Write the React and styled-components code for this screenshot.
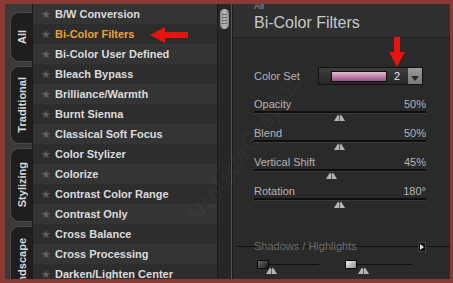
import React from "react";
import styled, { createGlobalStyle } from "styled-components";

const GlobalStyle = createGlobalStyle`
  html, body {
    margin: 0;
    padding: 0;
    background: #8a3a34;
  }
  body {
    font-family: "Liberation Sans", Arial, sans-serif;
  }
`;

const Frame = styled.div`
  position: relative;
  width: 453px;
  height: 283px;
  box-sizing: border-box;
  padding: 4px 3px 4px 5px;
  background: #8a3a34;
  overflow: hidden;
`;

const Inner = styled.div`
  display: flex;
  height: 100%;
  background: #2a2a2a;
  overflow: hidden;
`;

const TabStrip = styled.div`
  width: 28px;
  flex: none;
  display: flex;
  flex-direction: column;
  gap: 4px;
  padding-top: 8px;
  box-sizing: border-box;
  background: #3a3a3a;
  border-right: 1px solid #1a1a1a;
`;

const Tab = styled.div`
  flex: none;
  height: ${(p) => p.h}px;
  margin-left: 5px;
  background: #1e1e1e;
  border: 1px solid #4a4a4a;
  border-right: none;
  border-radius: 9px 0 0 9px;
  display: flex;
  align-items: center;
  justify-content: center;
  overflow: hidden;
`;

const TabLabel = styled.span`
  writing-mode: vertical-rl;
  transform: rotate(180deg);
  color: #d8d8d8;
  font-size: 11px;
  font-weight: bold;
  white-space: nowrap;
`;

const List = styled.div`
  width: 184px;
  flex: none;
  display: flex;
  flex-direction: column;
  background: #2e2e2e;
`;

const Row = styled.div`
  flex: none;
  height: 20px;
  display: flex;
  align-items: center;
  gap: 4px;
  padding-left: 8px;
  background: ${(p) => (p.odd ? "#2d2d2d" : "#343434")};
  font-size: 11px;
  font-weight: bold;
  color: ${(p) => (p.active ? "#f0a030" : "#dcdcdc")};
  white-space: nowrap;
`;

const Star = styled.span`
  color: #606060;
  font-size: 11px;
  width: 10px;
  font-family: "DejaVu Sans", sans-serif;
`;

const ScrollTrack = styled.div`
  width: 15px;
  flex: none;
  background: #262626;
  border-left: 1px solid #1a1a1a;
  border-right: 1px solid #555;
  box-sizing: border-box;
  padding: 5px 2px 0 2px;
`;

const Thumb = styled.div`
  height: 20px;
  border-radius: 5px;
  background: linear-gradient(90deg, #8a8a8a, #b8b8b8 50%, #8a8a8a);
  display: flex;
  flex-direction: column;
  justify-content: center;
  gap: 2px;
  padding: 0 2px;
`;

const Groove = styled.div`
  height: 1px;
  background: #6a6a6a;
`;

const Panel = styled.div`
  flex: 1;
  display: flex;
  flex-direction: column;
  background: #2a2a2a;
  border-left: 1px solid #1c1c1c;
`;

const Header = styled.div`
  height: 34px;
  flex: none;
  padding-left: 21px;
  background: #303030;
  border-bottom: 1px solid #1e1e1e;
  box-sizing: border-box;
  position: relative;
`;

const Crumb = styled.div`
  position: absolute;
  top: -3px;
  left: 21px;
  font-size: 9px;
  line-height: 10px;
  color: #9a9a9a;
`;

const Title = styled.div`
  padding-top: 10px;
  font-size: 16px;
  color: #c8c8c8;
`;

const Body = styled.div`
  flex: 1;
  display: flex;
  flex-direction: column;
  padding: 29px 24px 0 21px;
  > * {
    flex: none;
  }
`;

const ColorSetRow = styled.div`
  display: flex;
  align-items: center;
  height: 18px;
  margin-bottom: 12px;
`;

const Label = styled.span`
  font-size: 11px;
  white-space: nowrap;
  color: ${(p) => (p.dim ? "#6e6e6e" : "#b4b4b4")};
`;

const SetLabel = styled(Label)`
  width: 64px;
  flex: none;
`;

const Select = styled.div`
  width: 105px;
  height: 18px;
  display: flex;
  align-items: center;
  box-sizing: border-box;
  border: 1px solid #111;
  background: linear-gradient(#3e3e3e, #262626);
`;

const Swatch = styled.div`
  margin-left: 12px;
  width: 56px;
  height: 11px;
  border: 1px solid #120c10;
  box-sizing: border-box;
  background: linear-gradient(#e4b8d4, #b87aa2 60%, #8e5680);
`;

const SelectValue = styled.span`
  margin-left: 7px;
  width: 14px;
  font-size: 11px;
  color: #e6e6e6;
`;

const SelectButton = styled.div`
  margin-left: auto;
  width: 14px;
  height: 16px;
  background: linear-gradient(#9a9a9a, #7a7a7a);
  display: flex;
  align-items: flex-end;
  justify-content: center;
  padding-bottom: 3px;
  box-sizing: border-box;
`;

const Slider = styled.div`
  display: flex;
  flex-direction: column;
  height: 29px;
`;

const SliderHead = styled.div`
  display: flex;
  justify-content: space-between;
  align-items: center;
  height: 14px;
`;

const Value = styled.span`
  font-size: 11px;
  color: #b4b4b4;
`;

const Track = styled.div`
  position: relative;
  height: 2px;
  background: #0e0e0e;
  border-bottom: 1px solid #3a3a3a;
`;

const ThumbMark = styled.svg`
  position: absolute;
  top: 3px;
  display: block;
`;

const SectionRow = styled.div`
  position: relative;
  margin: 27px -24px 0 -21px;
  height: 12px;
  display: flex;
  align-items: center;
  padding-left: 21px;
`;

const SectionLine = styled.div`
  position: absolute;
  left: 3px;
  right: 0;
  top: 6px;
  height: 1px;
  background: #101010;
`;

const SectionLabel = styled.span`
  position: relative;
  font-size: 11px;
  color: #6c6c6c;
`;

const SectionButton = styled.div`
  position: absolute;
  right: 24px;
  top: 2px;
  width: 6px;
  height: 8px;
  background: #0c0c0c;
  border: 1px solid #444;
  display: flex;
  align-items: center;
  justify-content: center;
`;

const ToneRow = styled.div`
  display: flex;
  align-items: flex-start;
  margin-top: 8px;
  padding-left: 3px;
`;

const ToneGroup = styled.div`
  display: flex;
  align-items: flex-start;
  width: ${(p) => p.w}px;
`;

const ToneSwatch = styled.div`
  width: 12px;
  height: 9px;
  box-sizing: border-box;
  border: 1px solid #0a0a0a;
  background: ${(p) =>
    p.light
      ? "linear-gradient(135deg, #f0f0f0, #8a8a8a)"
      : "linear-gradient(135deg, #6a6a6a, #1a1a1a)"};
`;

const ToneTrack = styled.div`
  position: relative;
  margin-top: 4px;
  width: ${(p) => p.w}px;
  height: 1px;
  background: #0e0e0e;
`;

const Overlay = styled.svg`
  position: absolute;
  left: 0;
  top: 0;
  pointer-events: none;
`;

const Watermark = styled.div`
  position: absolute;
  left: 158px;
  top: 134px;
  transform: rotate(-55deg);
  font-family: "Liberation Serif", serif;
  font-size: 25px;
  color: rgba(255, 255, 255, 0.02);
  -webkit-text-stroke: 1px rgba(255, 255, 255, 0.05);
  letter-spacing: 1px;
  white-space: nowrap;
  pointer-events: none;
`;

const items = [
  "B/W Conversion",
  "Bi-Color Filters",
  "Bi-Color User Defined",
  "Bleach Bypass",
  "Brilliance/Warmth",
  "Burnt Sienna",
  "Classical Soft Focus",
  "Color Stylizer",
  "Colorize",
  "Contrast Color Range",
  "Contrast Only",
  "Cross Balance",
  "Cross Processing",
  "Darken/Lighten Center",
];

const sliders = [
  { label: "Opacity", value: "50%", pos: 50 },
  { label: "Blend", value: "50%", pos: 50 },
  { label: "Vertical Shift", value: "45%", pos: 45 },
  { label: "Rotation", value: "180°", pos: 50 },
];

const Mark = ({ left }) => (
  <ThumbMark width="11" height="7" viewBox="0 0 11 7" style={{ left: left - 5 }}>
    <polygon points="0,7 4,0.5 5.5,2.5 7,0.5 11,7" fill="#b4b4b4" />
    <line x1="5.5" y1="2.5" x2="5.5" y2="7" stroke="#5a5a5a" strokeWidth="1" />
  </ThumbMark>
);

const App = () => (
  <Frame>
    <GlobalStyle />
    <Inner>
      <TabStrip>
        <Tab h={48}>
          <TabLabel>All</TabLabel>
        </Tab>
        <Tab h={76}>
          <TabLabel>Traditional</TabLabel>
        </Tab>
        <Tab h={72}>
          <TabLabel>Stylizing</TabLabel>
        </Tab>
        <Tab h={80}>
          <TabLabel>Landscape</TabLabel>
        </Tab>
      </TabStrip>
      <List>
        {items.map((name, i) => (
          <Row key={name} odd={i % 2 === 1} active={i === 1}>
            <Star>★</Star>
            {name}
          </Row>
        ))}
      </List>
      <ScrollTrack>
        <Thumb>
          <Groove />
          <Groove />
          <Groove />
          <Groove />
        </Thumb>
      </ScrollTrack>
      <Panel>
        <Header>
          <Crumb>All</Crumb>
          <Title>Bi-Color Filters</Title>
        </Header>
        <Body>
          <ColorSetRow>
            <SetLabel>Color Set</SetLabel>
            <Select>
              <Swatch />
              <SelectValue>2</SelectValue>
              <SelectButton>
                <svg width="8" height="5" viewBox="0 0 8 5">
                  <polygon points="0,0 8,0 4,5" fill="#2a2a2a" />
                </svg>
              </SelectButton>
            </Select>
          </ColorSetRow>
          {sliders.map((s) => (
            <Slider key={s.label}>
              <SliderHead>
                <Label>{s.label}</Label>
                <Value>{s.value}</Value>
              </SliderHead>
              <Track>
                <Mark left={(170 * s.pos) / 100} />
              </Track>
            </Slider>
          ))}
          <SectionRow>
            <SectionLine />
            <SectionLabel>Shadows / Highlights</SectionLabel>
            <SectionButton>
              <svg width="4" height="6" viewBox="0 0 4 6">
                <polygon points="0,0 4,3 0,6" fill="#e0e0e0" />
              </svg>
            </SectionButton>
          </SectionRow>
          <ToneRow>
            <ToneGroup w={88}>
              <ToneSwatch />
              <ToneTrack w={50}>
                <Mark left={2} />
              </ToneTrack>
            </ToneGroup>
            <ToneGroup w={80}>
              <ToneSwatch light />
              <ToneTrack w={55}>
                <Mark left={6} />
              </ToneTrack>
            </ToneGroup>
          </ToneRow>
        </Body>
      </Panel>
    </Inner>
    <Watermark>VioletteGraphic</Watermark>
    <Overlay width="453" height="283" viewBox="0 0 453 283">
      <polygon points="150,35 165,27 165,32 188,32 188,38 165,38 165,43" fill="#e8120e" />
      <polygon points="397,67 389,52 394,52 394,37 400,37 400,52 405,52" fill="#e8120e" />
    </Overlay>
  </Frame>
);

export default App;
